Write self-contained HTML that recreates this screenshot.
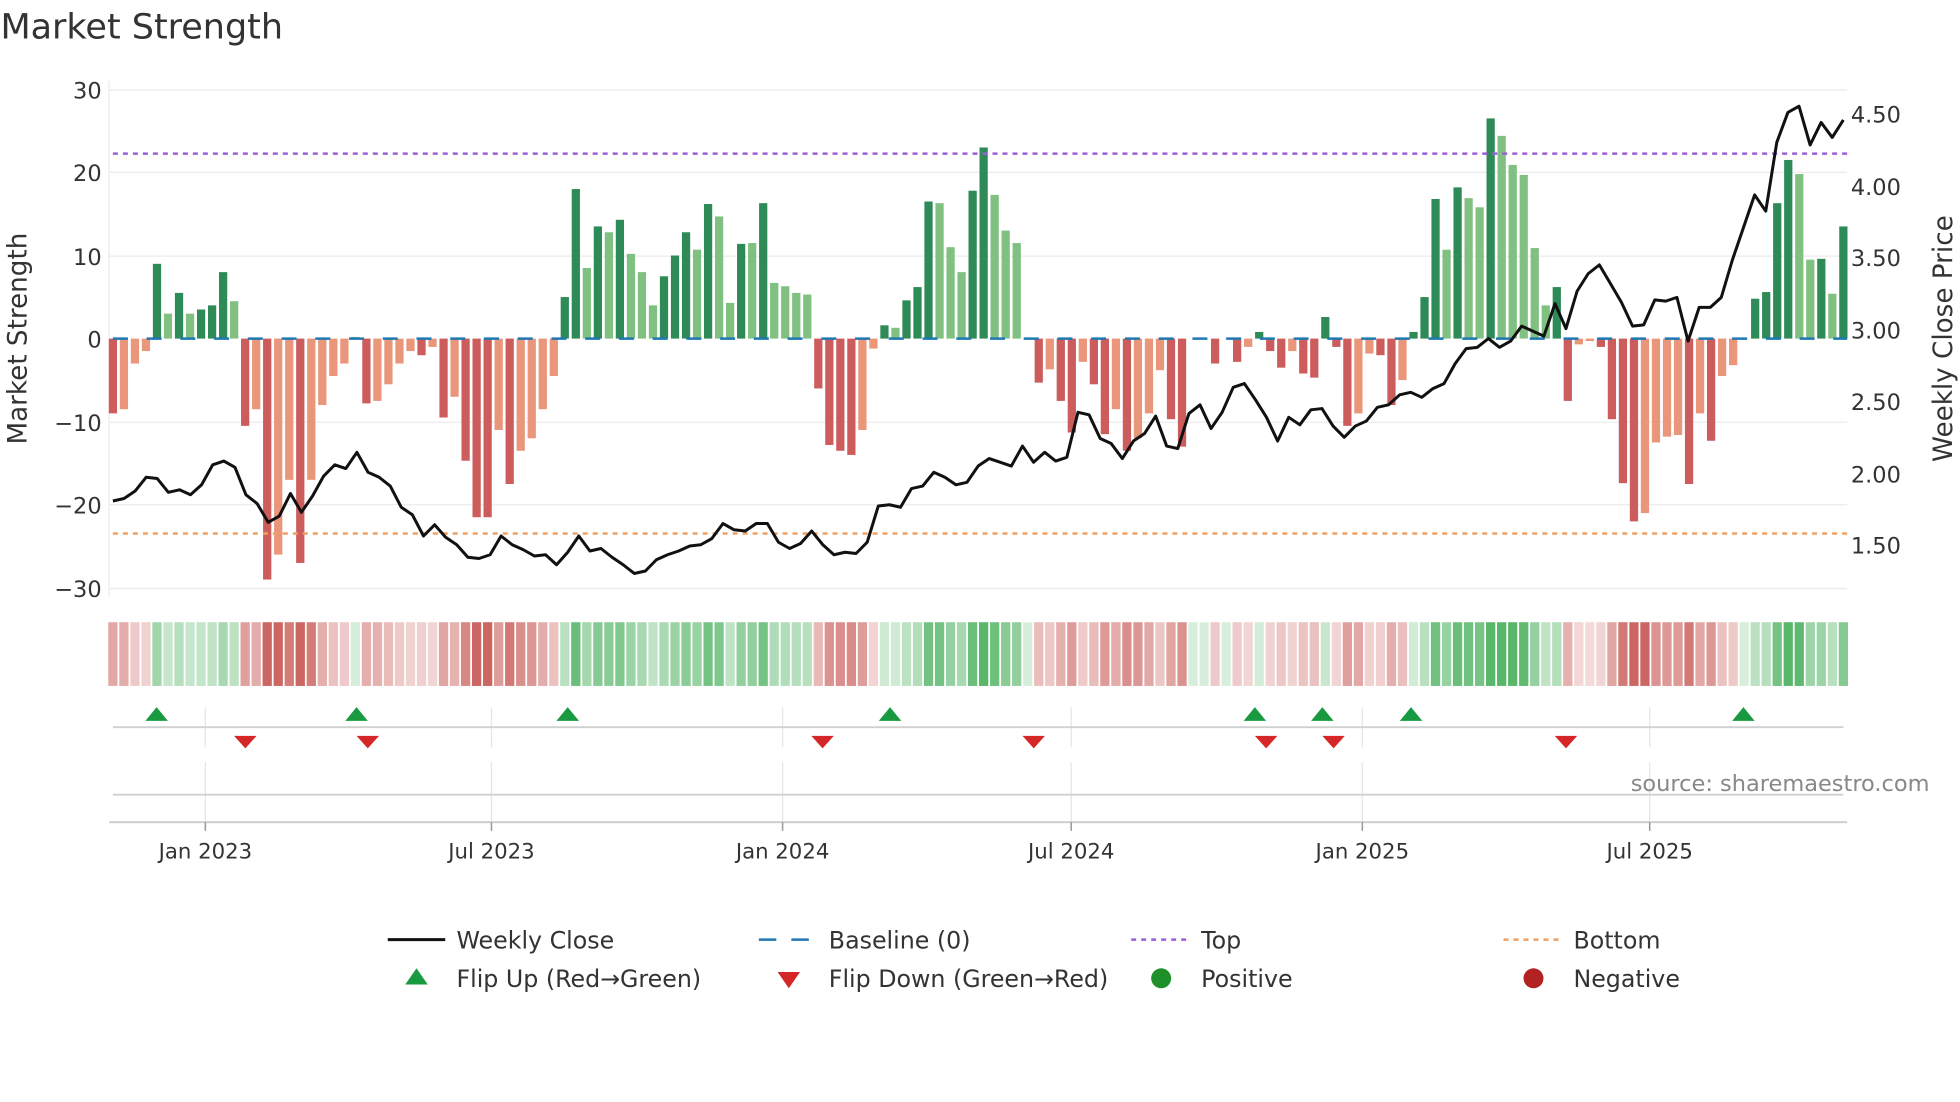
<!DOCTYPE html>
<html><head><meta charset="utf-8"><style>
html,body{margin:0;padding:0;background:#fff;}
svg{display:block;font-family:"DejaVu Sans","Liberation Sans",sans-serif;}
</style></head><body>
<svg id="s" width="1960" height="1102" viewBox="0 0 1568 882" xmlns="http://www.w3.org/2000/svg">
<rect width="1568" height="882" fill="#fff"/>
<text x="0" y="31" font-size="28" fill="#333">Market Strength</text>
<g stroke="#ebebeb" stroke-width="1">
<line x1="87" x2="1478" y1="72" y2="72"/><line x1="87" x2="1478" y1="138" y2="138"/><line x1="87" x2="1478" y1="205" y2="205"/>
<line x1="87" x2="1478" y1="338" y2="338"/><line x1="87" x2="1478" y1="404" y2="404"/><line x1="87" x2="1478" y1="471" y2="471"/>
<line x1="87" x2="87" y1="65" y2="478"/>
</g>
<g font-size="18" fill="#333" text-anchor="end">
<text x="81" y="79">30</text><text x="81" y="145">20</text><text x="81" y="212">10</text><text x="81" y="278">0</text>
<text x="81" y="345">−10</text><text x="81" y="411">−20</text><text x="81" y="478">−30</text>
</g>
<g font-size="18" fill="#333">
<text x="1481" y="98">4.50</text><text x="1481" y="156">4.00</text><text x="1481" y="213">3.50</text><text x="1481" y="271">3.00</text>
<text x="1481" y="328">2.50</text><text x="1481" y="386">2.00</text><text x="1481" y="443">1.50</text>
</g>
<text transform="translate(21,271) rotate(-90)" font-size="21" fill="#333" text-anchor="middle">Market Strength</text>
<text transform="translate(1562,271) rotate(-90)" font-size="21" fill="#333" text-anchor="middle">Weekly Close Price</text>
<g id="bars"></g>
<line x1="90" x2="1478" y1="271" y2="271" stroke="#1f77b4" stroke-width="2" stroke-dasharray="12,15"/>
<line x1="90" x2="1478" y1="123" y2="123" stroke="#9b5fd6" stroke-width="2" stroke-dasharray="4,4"/>
<line x1="90" x2="1478" y1="427" y2="427" stroke="#f0a060" stroke-width="2" stroke-dasharray="4,4"/>
<polyline id="price" fill="none" stroke="#111" stroke-width="2.4" stroke-linejoin="round"/>
<g id="heat"></g>
<g stroke="#e6e6e6" stroke-width="1">
<line x1="164" x2="164" y1="566" y2="598"/><line x1="393" x2="393" y1="566" y2="598"/><line x1="626" x2="626" y1="566" y2="598"/><line x1="857" x2="857" y1="566" y2="598"/><line x1="1090" x2="1090" y1="566" y2="598"/><line x1="1320" x2="1320" y1="566" y2="598"/>
<line x1="164" x2="164" y1="610" y2="658"/><line x1="393" x2="393" y1="610" y2="658"/><line x1="626" x2="626" y1="610" y2="658"/><line x1="857" x2="857" y1="610" y2="658"/><line x1="1090" x2="1090" y1="610" y2="658"/><line x1="1320" x2="1320" y1="610" y2="658"/>
</g>
<line x1="90" x2="1475" y1="582" y2="582" stroke="#d0d0d0" stroke-width="1.5"/>
<line x1="90" x2="1475" y1="636" y2="636" stroke="#d0d0d0" stroke-width="1.5"/>
<line x1="87" x2="1478" y1="658" y2="658" stroke="#ccc" stroke-width="1.5"/>
<g stroke="#999" stroke-width="1.2"><line x1="164" x2="164" y1="658" y2="665"/><line x1="393" x2="393" y1="658" y2="665"/><line x1="626" x2="626" y1="658" y2="665"/><line x1="857" x2="857" y1="658" y2="665"/><line x1="1090" x2="1090" y1="658" y2="665"/><line x1="1320" x2="1320" y1="658" y2="665"/></g>
<g id="marks"></g>
<text x="1544" y="633" font-size="18" fill="#888" text-anchor="end">source: sharemaestro.com</text>
<g font-size="17" fill="#333" text-anchor="middle">
<text x="164" y="687">Jan 2023</text><text x="393" y="687">Jul 2023</text><text x="626" y="687">Jan 2024</text><text x="857" y="687">Jul 2024</text><text x="1090" y="687">Jan 2025</text><text x="1320" y="687">Jul 2025</text>
</g>
<g font-size="19" fill="#333">
<line x1="310" x2="356" y1="752" y2="752" stroke="#111" stroke-width="2.4"/><text x="365" y="759">Weekly Close</text>
<line x1="607" x2="652" y1="752" y2="752" stroke="#1f77b4" stroke-width="2" stroke-dasharray="14,12"/><text x="663" y="759">Baseline (0)</text>
<line x1="905" x2="950" y1="752" y2="752" stroke="#9b5fd6" stroke-width="2" stroke-dasharray="4,4"/><text x="961" y="759">Top</text>
<line x1="1203" x2="1248" y1="752" y2="752" stroke="#f0a060" stroke-width="2" stroke-dasharray="4,4"/><text x="1259" y="759">Bottom</text>
<polygon points="324,788 342,788 333,775" fill="#1a9a40"/><text x="365" y="790">Flip Up (Red→Green)</text>
<polygon points="622,778 640,778 631,791" fill="#d62728"/><text x="663" y="790">Flip Down (Green→Red)</text>
<circle cx="929" cy="783" r="8" fill="#1f8f2a"/><text x="961" y="790">Positive</text>
<circle cx="1227" cy="783" r="8" fill="#b22222"/><text x="1259" y="790">Negative</text>
</g>
</svg>
<script>
var v=[[-9,1],[-8.5,0],[-3,0],[-1.5,0],[9,1],[3,0],[5.5,1],[3,0],[3.5,1],[4,1],[8,1],[4.5,0],[-10.5,1],[-8.5,0],[-29,1],[-26,0],[-17,0],[-27,1],[-17,0],[-8,0],[-4.5,0],[-3,0],[0.2,0],[-7.8,1],[-7.5,0],[-5.5,0],[-3,0],[-1.5,0],[-2,1],[-1,0],[-9.5,1],[-7,0],[-14.7,1],[-21.5,1],[-21.5,1],[-11,0],[-17.5,1],[-13.5,0],[-12,0],[-8.5,0],[-4.5,0],[5,1],[18,1],[8.5,0],[13.5,1],[12.8,0],[14.3,1],[10.2,0],[8,0],[4,0],[7.5,1],[10,1],[12.8,1],[10.7,0],[16.2,1],[14.7,0],[4.3,0],[11.4,1],[11.5,0],[16.3,1],[6.7,0],[6.3,0],[5.5,0],[5.3,0],[-6,1],[-12.8,1],[-13.5,1],[-14,1],[-11,0],[-1.2,0],[1.6,1],[1.3,0],[4.6,1],[6.2,1],[16.5,1],[16.3,0],[11,0],[8,0],[17.8,1],[23,1],[17.3,0],[13,0],[11.5,0],[0,0],[-5.3,1],[-3.7,0],[-7.5,1],[-11.3,1],[-2.8,0],[-5.5,1],[-11.5,1],[-8.5,0],[-13.5,1],[-12,0],[-9,0],[-3.8,0],[-9.7,1],[-13,1],[0,0],[0,0],[-3,1],[0,0],[-2.8,1],[-1,0],[0.8,1],[-1.5,1],[-3.5,1],[-1.5,0],[-4.2,1],[-4.7,1],[2.6,1],[-1,1],[-10.5,1],[-9,0],[-1.8,0],[-2,1],[-8,1],[-5,0],[0.8,1],[5,1],[16.8,1],[10.7,0],[18.2,1],[16.9,0],[15.8,0],[26.5,1],[24.4,0],[20.9,0],[19.7,0],[10.9,0],[4,0],[6.2,1],[-7.5,1],[-0.7,0],[-0.3,0],[-1,1],[-9.7,1],[-17.4,1],[-22,1],[-21,0],[-12.5,0],[-11.8,0],[-11.6,0],[-17.5,1],[-9,0],[-12.3,1],[-4.5,0],[-3.2,0],[0,0],[4.8,1],[5.6,1],[16.3,1],[21.5,1],[19.8,0],[9.5,0],[9.6,1],[5.4,0],[13.5,1]];
var n=v.length,x0=90,dx=(1475-90)/(n-1),b='',h='';
function col(val,d){if(val>=0)return d?'#2e8b57':'#80c080';return d?'#cd5c5c':'#e9967a';}
for(var i=0;i<n;i++){var x=x0+i*dx,val=v[i][0],y=271-val*6.65;
 if(val!=0)b+='<rect x="'+(x-3.3)+'" y="'+Math.min(y,271)+'" width="6.6" height="'+Math.abs(271-y)+'" fill="'+col(val,v[i][1])+'"/>';
 var m=val;
 var a=Math.min(0.85,0.2+Math.abs(m)/32);
 var fc=m>=0?'rgba(60,170,80,'+a+')':'rgba(195,75,70,'+a+')';
 h+='<rect x="'+(x-dx/2+0.7)+'" y="498" width="'+(dx-1.4)+'" height="51" fill="'+fc+'"/>';}
document.getElementById('bars').innerHTML=b;document.getElementById('heat').innerHTML=h;
var p=[401,399,393,382,383,394,392,396,388,372,369,374,396,403,418,413,395,410,397,381,372,375,362,378,382,389,406,412,429,420,430,436,446,447,444,429,436,440,445,444,452,442,429,441,439,446,452,459,457,448,444,441,437,436,431,419,424,425,419,419,434,439,435,425,436,444,442,443,434,405,404,406,391,389,378,382,388,386,373,367,370,373,357,370,362,369,366,330,332,351,355,367,353,347,333,357,359,331,324,343,330,310,307,320,334,353,334,340,328,327,341,350,341,337,326,324,316,314,318,311,307,291,279,278,271,278,273,261,265,269,243,263,233,219,212,227,242,261,260,240,241,238,273,246,246,238,208,182,156,169,114,90,85,116,98,110,96];
var pd=(1475-90)/(p.length-1),s='';for(var j=0;j<p.length;j++)s+=(90+j*pd).toFixed(1)+','+p[j]+' ';
document.getElementById('price').setAttribute('points',s);
var up=[125,285,454,712,1004,1058,1129,1395],dn=[196,294,658,827,1013,1067,1253],mk='';
up.forEach(function(x){mk+='<polygon points="'+(x-9)+',577 '+(x+9)+',577 '+x+',566" fill="#1a9a40"/>';});
dn.forEach(function(x){mk+='<polygon points="'+(x-9)+',589 '+(x+9)+',589 '+x+',599" fill="#d62728"/>';});
document.getElementById('marks').innerHTML=mk;
</script>
</body></html>
